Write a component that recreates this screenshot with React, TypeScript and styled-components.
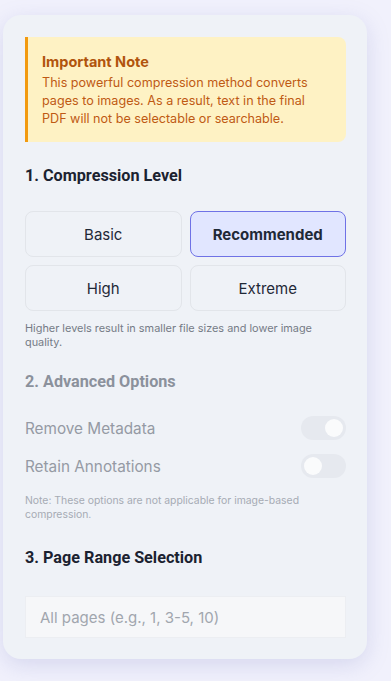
import React from 'react'
import styled, { createGlobalStyle } from 'styled-components'

const Global = createGlobalStyle`
  html, body {
    margin: 0;
    padding: 0;
    background: #f1f1fc;
    font-family: Inter, "Noto Sans", sans-serif;
  }
`

const Page = styled.div`
  padding: 15px 24px 22px 3px;
  min-height: 681px;
  box-sizing: border-box;
`

const Card = styled.div`
  background: #eff2f7;
  border-radius: 18px;
  padding: 22px 21px 21px 22px;
  box-shadow: 0 6px 22px rgba(120, 125, 190, 0.22);
`

const Notice = styled.div`
  background: #fef2c4;
  border-left: 3px solid #f29a0f;
  border-radius: 0 8px 8px 0;
  padding: 15px 20px 14px 14px;
`

const NoticeTitle = styled.div`
  font-weight: 700;
  font-size: 14.5px;
  color: #b1540d;
  line-height: 20px;
`

const NoticeText = styled.p`
  margin: 2px 0 0;
  font-size: 12.6px;
  line-height: 18px;
  color: #bf5a14;
`

const Heading = styled.h3<{ $muted?: boolean }>`
  margin: 0;
  font-family: Roboto, "Noto Sans", sans-serif;
  font-weight: 700;
  font-size: 16.2px;
  line-height: 20px;
  color: ${p => (p.$muted ? '#8b919c' : '#1b2230')};
`

const Section = styled.section<{ $top: number }>`
  margin-top: ${p => p.$top}px;
`

const LevelGrid = styled.div`
  display: grid;
  grid-template-columns: 1fr 1fr;
  gap: 8px;
  margin-top: 25px;
`

const LevelButton = styled.button<{ $active?: boolean }>`
  height: 46px;
  border-radius: 8px;
  border: 1px solid ${p => (p.$active ? '#6f72e6' : '#e2e5ea')};
  background: ${p => (p.$active ? '#e1e6ff' : '#eff2f7')};
  font-family: Inter, sans-serif;
  font-size: 15px;
  font-weight: ${p => (p.$active ? 700 : 400)};
  color: #1f2937;
  cursor: pointer;
`

const Hint = styled.p<{ $faint?: boolean; $top: number }>`
  margin: ${p => p.$top}px 0 0;
  font-size: ${p => (p.$faint ? '10.4px' : '10.9px')};
  line-height: 14px;
  color: ${p => (p.$faint ? '#a6abb4' : '#757b86')};
`

const Options = styled.div`
  display: flex;
  flex-direction: column;
  gap: 14px;
  margin-top: 24px;
`

const OptionRow = styled.div`
  display: flex;
  align-items: center;
  justify-content: space-between;
`

const OptionLabel = styled.span`
  font-size: 15.3px;
  color: #959aa4;
`

const Toggle = styled.span<{ $on?: boolean }>`
  width: 45px;
  height: 24px;
  border-radius: 12px;
  background: #e6e9ef;
  display: flex;
  align-items: center;
  justify-content: ${p => (p.$on ? 'flex-end' : 'flex-start')};
  padding: 0 3px;
  box-sizing: border-box;
`

const Knob = styled.span`
  width: 18px;
  height: 18px;
  border-radius: 50%;
  background: #fafbfc;
`

const RangeInput = styled.input`
  display: block;
  width: 100%;
  box-sizing: border-box;
  margin-top: 28px;
  height: 42px;
  border: 1px solid #eceef2;
  background: #f6f7f9;
  padding: 0 14px;
  font-family: Inter, sans-serif;
  font-size: 15px;
  color: #1f2937;
  outline: none;

  &::placeholder {
    color: #a1a6ae;
  }
`

const levels = ['Basic', 'Recommended', 'High', 'Extreme']

export default function App() {
  return (
    <>
      <Global />
      <Page>
        <Card>
          <Notice>
            <NoticeTitle>Important Note</NoticeTitle>
            <NoticeText>
              This powerful compression method converts pages to images. As a
              result, text in the final PDF will not be selectable or
              searchable.
            </NoticeText>
          </Notice>

          <Section $top={24}>
            <Heading>1. Compression Level</Heading>
            <LevelGrid>
              {levels.map(l => (
                <LevelButton key={l} $active={l === 'Recommended'}>
                  {l}
                </LevelButton>
              ))}
            </LevelGrid>
            <Hint $top={10}>
              Higher levels result in smaller file sizes and lower image
              quality.
            </Hint>
          </Section>

          <Section $top={23}>
            <Heading $muted>2. Advanced Options</Heading>
            <Options>
              <OptionRow>
                <OptionLabel>Remove Metadata</OptionLabel>
                <Toggle $on>
                  <Knob />
                </Toggle>
              </OptionRow>
              <OptionRow>
                <OptionLabel>Retain Annotations</OptionLabel>
                <Toggle>
                  <Knob />
                </Toggle>
              </OptionRow>
            </Options>
            <Hint $faint $top={16}>
              Note: These options are not applicable for image-based
              compression.
            </Hint>
          </Section>

          <Section $top={26}>
            <Heading>3. Page Range Selection</Heading>
            <RangeInput placeholder="All pages (e.g., 1, 3-5, 10)" />
          </Section>
        </Card>
      </Page>
    </>
  )
}
